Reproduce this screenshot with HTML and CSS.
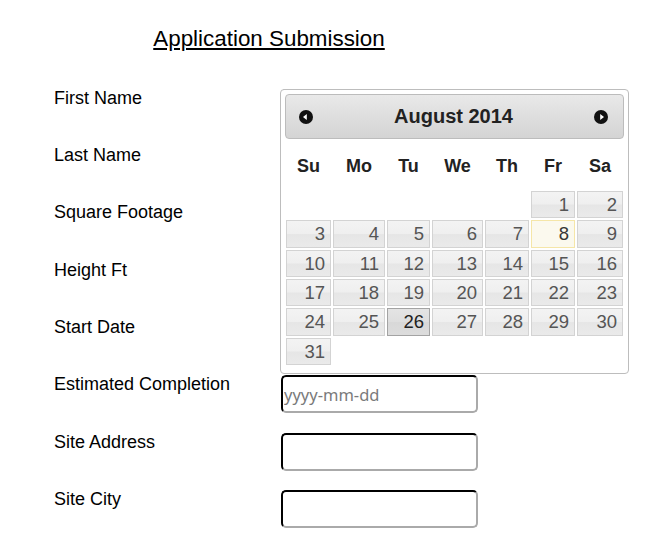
FILE: index.html
```html
<!DOCTYPE html>
<html lang="en">
<head>
<meta charset="utf-8">
<title>Application Submission</title>
<link rel="stylesheet" href="styles.css">
</head>
<body>
<div class="page">
  <form class="form">
    <h2 class="title">Application Submission</h2>
    <div class="fields">
      <label class="label">First Name</label><input class="field" type="text">
      <label class="label">Last Name</label><input class="field" type="text">
      <label class="label">Square Footage</label><input class="field" type="text">
      <label class="label">Height Ft</label><input class="field" type="text">
      <label class="label">Start Date</label><input class="field" type="text">
      <label class="label">Estimated Completion</label><input class="field" type="text" placeholder="yyyy-mm-dd">
      <label class="label">Site Address</label><input class="field" type="text">
      <label class="label">Site City</label><input class="field" type="text">
    </div>
  </form>

  <div class="datepicker">
    <div class="dp-header">
      <span class="dp-nav">
        <svg width="14" height="14" viewBox="0 0 14 14"><circle cx="7" cy="7" r="7" fill="#111"/><polygon points="4,7 7.8,4 7.8,10" fill="#fff"/></svg>
      </span>
      <span class="dp-title">August 2014</span>
      <span class="dp-nav">
        <svg width="14" height="14" viewBox="0 0 14 14"><circle cx="7" cy="7" r="7" fill="#111"/><polygon points="10,7 6.2,4 6.2,10" fill="#fff"/></svg>
      </span>
    </div>
    <table class="dp-table">
      <colgroup>
        <col class="c1"><col class="c2"><col class="c3"><col class="c4"><col class="c5"><col class="c6"><col class="c7">
      </colgroup>
      <thead>
        <tr><th>Su</th><th>Mo</th><th>Tu</th><th>We</th><th>Th</th><th>Fr</th><th>Sa</th></tr>
      </thead>
      <tbody>
        <tr><td></td><td></td><td></td><td></td><td></td><td><a class="day">1</a></td><td><a class="day">2</a></td></tr>
        <tr><td><a class="day">3</a></td><td><a class="day">4</a></td><td><a class="day">5</a></td><td><a class="day">6</a></td><td><a class="day">7</a></td><td><a class="day today">8</a></td><td><a class="day">9</a></td></tr>
        <tr><td><a class="day">10</a></td><td><a class="day">11</a></td><td><a class="day">12</a></td><td><a class="day">13</a></td><td><a class="day">14</a></td><td><a class="day">15</a></td><td><a class="day">16</a></td></tr>
        <tr><td><a class="day">17</a></td><td><a class="day">18</a></td><td><a class="day">19</a></td><td><a class="day">20</a></td><td><a class="day">21</a></td><td><a class="day">22</a></td><td><a class="day">23</a></td></tr>
        <tr><td><a class="day">24</a></td><td><a class="day">25</a></td><td><a class="day active">26</a></td><td><a class="day">27</a></td><td><a class="day">28</a></td><td><a class="day">29</a></td><td><a class="day">30</a></td></tr>
        <tr><td><a class="day">31</a></td><td></td><td></td><td></td><td></td><td></td><td></td></tr>
      </tbody>
    </table>
  </div>
</div>
</body>
</html>
```
FILE: styles.css
```css
* { box-sizing: border-box; }

html, body {
  margin: 0;
  padding: 0;
  background: #fff;
}

body {
  font-family: "Liberation Sans", Arial, sans-serif;
  color: #000;
}

.page {
  position: relative;
  width: 659px;
  height: 534px;
  overflow: hidden;
}

.form {
  width: 538px;
  margin: 0;
  padding-top: 26px;
}

.title {
  margin: 0;
  font-size: 22.4px;
  font-weight: normal;
  line-height: 1.15;
  text-align: center;
  text-decoration: underline;
  text-underline-offset: 2px;
}

.fields {
  display: grid;
  grid-template-columns: 227px 197px;
  grid-auto-rows: 38px;
  row-gap: 19.33px;
  padding-left: 54px;
  margin-top: 37px;
}

.label {
  font-size: 18px;
  line-height: 20px;
  align-self: start;
  margin-top: -1px;
  white-space: nowrap;
}

.field {
  width: 197px;
  height: 38px;
  margin: 0;
  padding: 0 1px;
  border-style: solid;
  border-width: 2px;
  border-color: #000 #aaa #aaa #000;
  border-radius: 5px;
  background: #fff;
  font-family: "Noto Sans", "Open Sans", sans-serif;
  font-size: 16.5px;
  outline: none;
}

.field::placeholder {
  color: #7a7a7a;
}

/* datepicker popup */
.datepicker {
  position: absolute;
  left: 280px;
  top: 89px;
  width: 349px;
  padding: 4px;
  background: #fff;
  border: 1px solid #bdbdbd;
  border-radius: 4px;
  color: #222;
}

.dp-header {
  display: flex;
  align-items: center;
  height: 45px;
  padding: 0 15px 0 13px;
  border: 1px solid #bcbcbc;
  border-radius: 4px;
  background: linear-gradient(to bottom, #e9e9e9 0%, #dedede 50%, #d4d4d4 100%);
}

.dp-nav {
  display: flex;
  width: 14px;
  height: 14px;
}

.dp-title {
  flex: 1;
  text-align: center;
  font-size: 20px;
  font-weight: bold;
  color: #222;
}

.dp-table {
  width: 100%;
  table-layout: fixed;
  border-collapse: separate;
  border-spacing: 0;
  margin: 0 0 3px;
}

.c1 { width: 47px; }
.c2 { width: 54px; }
.c3 { width: 45px; }
.c4 { width: 53px; }
.c5 { width: 46px; }
.c6 { width: 46px; }
.c7 { width: 48px; }

.dp-table th {
  height: 51px;
  padding: 4px 0 0;
  font-size: 18px;
  font-weight: bold;
  text-align: center;
  color: #222;
}

.dp-table td {
  padding: 1px;
}

.day {
  display: block;
  height: 27.33px;
  line-height: 25.33px;
  padding: 0 5px 0 0;
  text-align: right;
  font-size: 18.5px;
  color: #555;
  border: 1px solid #d3d3d3;
  background: linear-gradient(to bottom, #f3f3f3 0%, #efefef 48%, #e6e6e6 52%, #eaeaea 100%);
}

.day.today {
  border-color: #f5e6a8;
  background: #fbf9ee;
  color: #363636;
}

.day.active {
  border-color: #a3a3a3;
  background: linear-gradient(to bottom, #e4e4e4 0%, #dedede 48%, #d8d8d8 52%, #dcdcdc 100%);
  color: #212121;
}
```
